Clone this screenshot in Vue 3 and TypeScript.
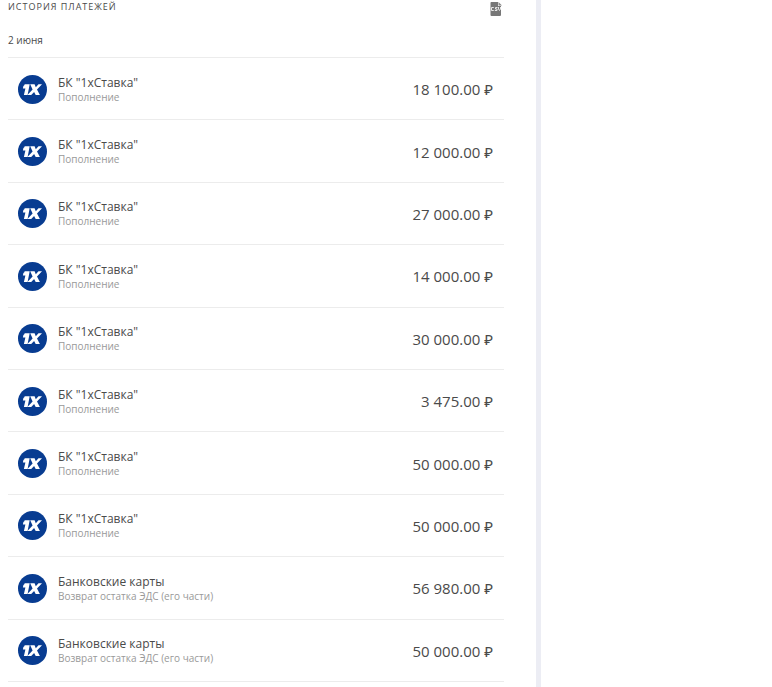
<script setup lang="ts">
interface Payment {
  id: number
  title: string
  note: string
  amount: string
}

const topUps: string[] = [
  '18 100.00',
  '12 000.00',
  '27 000.00',
  '14 000.00',
  '30 000.00',
  '3 475.00',
  '50 000.00',
  '50 000.00',
]
const refunds: string[] = ['56 980.00', '50 000.00']

const payments: Payment[] = [
  ...topUps.map((amount) => ({ title: 'БК "1хСтавка"', note: 'Пополнение', amount })),
  ...refunds.map((amount) => ({
    title: 'Банковские карты',
    note: 'Возврат остатка ЭДС (его части)',
    amount,
  })),
].map((payment, id) => ({ id, ...payment }))
</script>

<template>
  <main class="history">
    <header class="head">
      <h1 class="heading">История платежей</h1>
      <button class="export" type="button" aria-label="CSV">
        <svg viewBox="0 0 12 14" width="12" height="14" aria-hidden="true">
          <path d="M1 0h7v4h3v9a1 1 0 0 1-1 1H1.5a1 1 0 0 1-1-1V1a1 1 0 0 1 .5-1z" fill="#777" />
          <path d="M8.5 0L12 3.5H8.500z" fill="#8a8a8a" />
          <path
            d="M3.8 5.5H1.5v3h2.3M7.500 5.500h-2V7H7v1.500H4.800M8.500 5v2l1 1.500 1-1.500V5"
            fill="none"
            stroke="#e6e6e6"
          />
        </svg>
      </button>
    </header>
    <h2 class="date">2 июня</h2>
    <ul class="list">
      <li v-for="payment in payments" :key="payment.id" class="row">
        <svg class="logo" viewBox="0 0 29 29" width="29" height="29" aria-hidden="true">
          <circle cx="14.5" cy="14.5" r="14.5" fill="#083c91" />
          <path d="M6.7 9.2h5L9.6 20H5.9l1.5-6.6H4.900l.5-2.500c.8-.3 1.200-.9 1.300-1.700z" fill="#fff" />
          <path
            d="M12.200 9.200h4.400l1.200 3 2.700-3H24l-5 5.300 2.900 5.500h-4.200l-1.600-3-2.900 3H9.400l5.200-5.500z"
            fill="#fff"
          />
        </svg>
        <div class="info">
          <div class="title">{{ payment.title }}</div>
          <div class="note">{{ payment.note }}</div>
        </div>
        <div class="amount">{{ payment.amount }} ₽</div>
      </li>
    </ul>
  </main>
</template>

<style>
body {
  background: #fff;
}
</style>

<style scoped>
.history {
  box-sizing: border-box;
  display: flex;
  flex-direction: column;
  width: 100%;
  max-width: 541px;
  min-height: 100vh;
  padding: 0 32px 5px 8px;
  border-right: 5px solid #ecedf4;
  font-family: 'Open Sans', 'Noto Sans', sans-serif;
  color: #4a4a4a;
}

.head {
  display: flex;
  align-items: flex-start;
  justify-content: space-between;
  height: 32px;
}

.heading {
  margin: 0;
  font-size: 9px;
  font-weight: 400;
  line-height: 14px;
  letter-spacing: 1px;
  text-transform: uppercase;
}

.export {
  display: flex;
  margin: 0;
  padding: 2px 2px 0 0;
  border: 0;
  background: none;
  cursor: pointer;
}

.date {
  margin: 0;
  padding-bottom: 9px;
  font-size: 10px;
  font-weight: 400;
  line-height: 16px;
}

.list {
  display: grid;
  flex: 1;
  grid-auto-rows: 1fr;
  margin: 0;
  padding: 0;
  border-top: 1px solid #ececec;
  list-style: none;
}

.row {
  display: flex;
  align-items: center;
  gap: 11px;
  padding: 9px 11px 8px 10px;
  border-bottom: 1px solid #ececec;
}

.logo {
  flex: none;
}

.info {
  flex: 1;
}

.title {
  font-size: 12px;
  line-height: 16px;
}

.note {
  font-size: 10px;
  line-height: 13px;
  color: #999;
}

.amount {
  font-size: 15px;
  line-height: 20px;
  white-space: nowrap;
}
</style>
